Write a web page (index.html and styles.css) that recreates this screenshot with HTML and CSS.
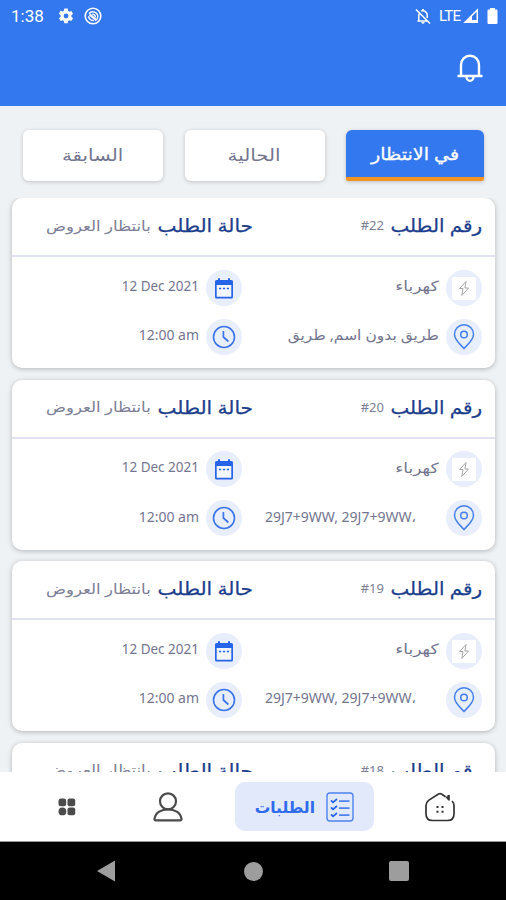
FILE: index.html
```html
<!DOCTYPE html>
<html lang="ar" dir="rtl">
<head>
<meta charset="utf-8">
<title>الطلبات</title>
<link rel="stylesheet" href="styles.css">
</head>
<body>
<svg class="defs" aria-hidden="true">
  <symbol id="bolt" viewBox="0 0 36 36"><rect x="6" y="7" width="24" height="23" rx="1" fill="#fff"/><path d="M20 11.500L13.500 18.500H17L15.800 25.500L22.500 18H18.900Z" fill="none" stroke="#a5a5aa" stroke-width="1" stroke-linejoin="round"/></symbol>
  <symbol id="pin" viewBox="0 0 36 36"><g fill="none" stroke="#4480ee" stroke-width="1.500"><path d="M18 29.500C15.500 26.500 8.500 21.500 8.500 15.300a9.500 9.500 0 0 1 19 0C27.500 21.500 20.500 26.500 18 29.500Z"/><circle cx="18" cy="15.500" r="3.300"/></g></symbol>
  <symbol id="calendar" viewBox="0 0 36 36"><path d="M10.500 10h1.500V8.300h2V10h8V8.300h2V10h1.500a1.500 1.500 0 0 1 1.500 1.500V27a1.500 1.500 0 0 1-1.500 1.500h-15A1.500 1.500 0 0 1 9 27V11.500a1.500 1.500 0 0 1 1.500-1.500Z" fill="#2563e8"/><path d="M10.700 15h14.600v11.700H10.700Z" fill="#f4f6ff"/><path d="M13 18.600h2.200m1.700 0h2.200m1.700 0H23" stroke="#2563e8" stroke-width="1.500"/></symbol>
  <symbol id="clock" viewBox="0 0 36 36"><g fill="none" stroke="#3c74ea"><circle cx="18" cy="18" r="10.500" stroke-width="1.600"/><path d="M17.400 12v6l5 4.500" stroke-width="1.700"/></g></symbol>
</svg>
<div class="screen">
  <header class="top">
    <div class="status" dir="ltr">
      <span class="time">1:38</span>
      <svg class="gear" viewBox="0 0 24 24"><path fill="#fff" fill-rule="evenodd" d="M19.140 12.940c.04-.3.06-.61.06-.94s-.02-.64-.07-.94l2.030-1.580a.49.49 0 0 0 .12-.61l-1.920-3.320a.49.49 0 0 0-.59-.22l-2.390.96a7 7 0 0 0-1.620-.94l-.36-2.540A.48.48 0 0 0 13.920 2h-3.840a.48.48 0 0 0-.48.410l-.36 2.540a7 7 0 0 0-1.620.94l-2.390-.96a.48.48 0 0 0-.59.220L2.740 8.870a.48.48 0 0 0 .12.610l2.030 1.580a8 8 0 0 0 0 1.880l-2.030 1.580a.49.49 0 0 0-.12.610l1.920 3.320c.12.220.37.290.59.220l2.390-.96c.5.380 1.030.7 1.620.94l.36 2.540c.05.240.24.410.48.410h3.840c.24 0 .44-.17.480-.41l.36-2.540a7 7 0 0 0 1.620-.94l2.390.96c.22.080.47 0 .59-.22l1.920-3.320a.48.48 0 0 0-.12-.61ZM12 15.200a3.200 3.200 0 1 1 0-6.400 3.200 3.200 0 0 1 0 6.400Z"/></svg>
      <svg class="badge" viewBox="0 0 18 18"><g fill="none" stroke="#fff"><circle cx="9" cy="9" r="7.800" stroke-width="1.600"/><path d="M5 6.500a5 5 0 0 1 8.800 3.300 5 5 0 0 1-2.800 3.700" stroke-width="1.400"/><path d="M4.600 9.200a4.500 4.500 0 0 0 5.200 4.300" stroke-width="1.500"/><path d="m5.500 7.300 6 5" stroke-width="2.200"/><path d="M8.300 7.200a3 3 0 0 1 3.200 3" stroke-width="1.400"/></g></svg>
      <span class="grow"></span>
      <svg class="mute" viewBox="0 0 16 17"><g fill="none" stroke="#fff" stroke-width="1.500"><path d="m1 1.500 14 14M3.800 13V7.500q0-1.500.7-2.500M6 3.200a4.300 4.300 0 0 1 6.200 4.300V10M2.500 13h9.500"/></g><path d="M6.300 14h3.400a1.700 1.700 0 0 1-3.400 0ZM7 1h2v2H7Z" fill="#fff"/></svg>
      <span class="lte">LTE</span>
      <svg class="signal" viewBox="0 0 16 16"><path d="M14.300 2v12.300H2Z" fill="none" stroke="#fff" stroke-width="1.500"/><path d="M1 15 9 7v5h6v3Z" fill="#fff"/></svg>
      <svg class="battery" viewBox="0 0 11 18"><path d="M3 1h5v1.600h1.500q1 0 1 1V16q0 1-1 1h-8q-1 0-1-1V3.600q0-1 1-1H3Z" fill="#fff"/></svg>
    </div>
    <svg class="bell" viewBox="0 0 28 30"><g fill="none" stroke="#fff" stroke-width="2.400"><path d="M5 23V12a9 9.300 0 0 1 18 0v11M1.500 23h25"/><path d="M10.500 23.500a3.500 4.400 0 0 0 7 0"/></g></svg>
  </header>

  <nav class="tabs">
    <a class="tab active"><span>في الانتظار</span></a>
    <a class="tab"><span>الحالية</span></a>
    <a class="tab"><span>السابقة</span></a>
  </nav>

  <main class="list">
    <article class="card">
      <div class="head"><div class="number"><b>رقم الطلب</b><span dir="ltr">#22</span></div><div class="state"><b>حالة الطلب</b><span>بانتظار العروض</span></div></div>
      <div class="details">
        <div class="item"><svg><use href="#bolt"/></svg><span class="service">كهرباء</span></div>
        <div class="item"><svg><use href="#calendar"/></svg><span class="date" dir="ltr">12 Dec 2021</span></div>
        <div class="item"><svg><use href="#pin"/></svg><span class="place">طريق بدون اسم, طريق</span></div>
        <div class="item"><svg><use href="#clock"/></svg><span dir="ltr">12:00 am</span></div>
      </div>
    </article>
    <article class="card">
      <div class="head"><div class="number"><b>رقم الطلب</b><span dir="ltr">#20</span></div><div class="state"><b>حالة الطلب</b><span>بانتظار العروض</span></div></div>
      <div class="details">
        <div class="item"><svg><use href="#bolt"/></svg><span class="service">كهرباء</span></div>
        <div class="item"><svg><use href="#calendar"/></svg><span class="date" dir="ltr">12 Dec 2021</span></div>
        <div class="item"><svg><use href="#pin"/></svg><span class="code" dir="ltr">29J7+9WW, 29J7+9WW،</span></div>
        <div class="item"><svg><use href="#clock"/></svg><span dir="ltr">12:00 am</span></div>
      </div>
    </article>
    <article class="card">
      <div class="head"><div class="number"><b>رقم الطلب</b><span dir="ltr">#19</span></div><div class="state"><b>حالة الطلب</b><span>بانتظار العروض</span></div></div>
      <div class="details">
        <div class="item"><svg><use href="#bolt"/></svg><span class="service">كهرباء</span></div>
        <div class="item"><svg><use href="#calendar"/></svg><span class="date" dir="ltr">12 Dec 2021</span></div>
        <div class="item"><svg><use href="#pin"/></svg><span class="code" dir="ltr">29J7+9WW, 29J7+9WW،</span></div>
        <div class="item"><svg><use href="#clock"/></svg><span dir="ltr">12:00 am</span></div>
      </div>
    </article>
    <article class="card">
      <div class="head"><div class="number"><b>رقم الطلب</b><span dir="ltr">#18</span></div><div class="state"><b>حالة الطلب</b><span>بانتظار العروض</span></div></div>
    </article>
  </main>

  <nav class="bottom" dir="ltr">
    <svg class="grid" viewBox="0 0 18 18" fill="#4b4b4b"><rect x=".5" y=".5" width="7.700" height="7.700" rx="2.500"/><rect x="9.500" y=".5" width="7.700" height="7.700" rx="2"/><circle cx="4.400" cy="13.400" r="3.900"/><rect x="9.500" y="9.500" width="7.700" height="7.700" rx="2"/></svg>
    <svg class="person" viewBox="0 0 30 30"><g fill="none" stroke="#4b4b4b" stroke-width="2.200"><circle cx="15" cy="9.300" r="8"/><path d="M3 28.400q-1.700 0-1.500-1.700C2.500 20.500 8.500 17.300 15 17.300s12.500 3.200 13.500 9.400q.2 1.700-1.500 1.700Z"/></g></svg>
    <a class="current"><span dir="rtl">الطلبات</span>
      <svg viewBox="0 0 28 30"><g fill="none" stroke="#4f83ed" stroke-width="1.400"><rect x="1" y="1" width="26" height="28" rx="3"/><path d="M13 9.200h10.500M13 16.200h10.500M13 23.200h10.500" stroke-width="1.800"/><path d="m5 8.300 2 2 4-3.300M5 15.300l2 2 4-3.300M5 22.300l2 2 4-3.300" stroke="#2563e8" stroke-width="1.700"/></g></svg>
    </a>
    <svg class="home" viewBox="0 0 30 30"><path d="M20.500 4.700 16.500 2q-1.500-.9-3 0L3.600 8.400Q1 10.500 1 13.500V22q0 6.500 6.500 6.500h15Q29 28.500 29 22v-8.500q0-2.500-2-4.500" fill="none" stroke="#333" stroke-width="1.700"/><path d="M20 4.500h2.500V3h2.300v5.500h-1.500ZM11.500 14h2v2h-2ZM16.500 14h2v2h-2ZM11.500 18.700h2v2h-2ZM16.500 18.700h2v2h-2Z" fill="#333"/></svg>
  </nav>
  <footer class="system" dir="ltr">
    <svg class="back" viewBox="0 0 18 22"><path d="M0 11 18 .5v21Z" fill="#9d9d9d"/></svg>
    <i class="circle"></i>
    <i class="square"></i>
  </footer>
</div>
</body>
</html>
```

FILE: styles.css
```css
* { box-sizing: border-box; }
body { margin: 0; font-family: "Noto Sans", "DejaVu Sans", sans-serif; }
.defs { display: none; }
svg { display: block; flex: none; }
.screen { width: 506px; height: 900px; display: flex; flex-direction: column; overflow: hidden; background: #eef2f5; }
.top { height: 106px; flex: none; background: #3478f0; }
.status { height: 32px; display: flex; align-items: center; padding: 0 8px 0 11px; color: #fff; font-family: Roboto, sans-serif; }
.time { font-size: 17px; width: 46px; }
.gear { width: 18px; height: 18px; }
.badge { width: 18px; height: 18px; margin-left: 9px; }
.grow { flex: 1; }
.mute { width: 16px; height: 17px; }
.lte { font-size: 15px; width: 24px; margin-left: 8px; letter-spacing: -.8px; }
.signal { width: 16px; height: 16px; }
.battery { width: 11px; height: 18px; margin-left: 8px; }
.bell { width: 28px; height: 30px; margin: 21px 22px 0 0; }
.tabs { height: 92px; flex: none; display: flex; justify-content: space-between; padding: 24px 22px 0 23px; }
.tab { width: 140px; height: 51px; padding-bottom: 3px; display: flex; align-items: center; justify-content: center; border-radius: 6px; background: #fff; color: #73758f; font-size: 16.500px; box-shadow: 0 1px 4px #0003; }
.tab span { transform: scaleX(1.2); }
.tab.active { width: 138px; background: #3478f0; color: #fff; border-bottom: 4px solid #f3931f; padding: 0; border-radius: 6px 6px 2px 2px; -webkit-text-stroke: .3px; }
.tab.active span { transform: scaleX(1.16); }
.list { flex: 1; min-height: 0; overflow: hidden; padding: 0 11px 0 12px; display: flex; flex-direction: column; gap: 11.500px; }
.card { height: 170px; flex: none; border-radius: 10px; background: #fff; box-shadow: 0 1px 5px #00000040; }
.head { height: 59px; border-bottom: 2px solid #dfe3f2; display: flex; padding: 0 13px 3px 0; }
.number, .state { display: flex; align-items: center; gap: 7px; white-space: nowrap; color: #7c7e96; font-size: 14px; }
.number { width: 229px; }
.number span { font-size: 13px; }
.head b { width: 91px; font-size: 18px; font-weight: 400; color: #1c3d8c; transform: scaleX(1.105); transform-origin: right; -webkit-text-stroke: .25px; }
.head .state b { width: 95px; transform: scaleX(1.12); }
.state span { transform: scaleX(1.18); transform-origin: right; }
.details { display: grid; grid-template-columns: 240px 1fr; grid-template-rows: 37px 37px; row-gap: 12px; padding: 12px 13px 0 0; }
.item { display: flex; align-items: center; gap: 7px; color: #73758f; font-size: 14px; white-space: nowrap; }
.item svg { width: 36px; height: 36px; border-radius: 50%; background: #e9eefc; }
.item span { margin-bottom: 4px; transform-origin: right; }
.item .service { transform: scaleX(1.22); }
.item .place { transform: scaleX(1.105); }
.item .date { font-size: 13.500px; }
.item .code { margin-right: 23px; }
.bottom { height: 70px; flex: none; background: #fff; border-bottom: 1px solid #999; display: flex; align-items: center; }
.grid { width: 18px; height: 18px; margin-left: 58px; }
.person { width: 30px; height: 30px; margin-left: 77px; }
.current { width: 139px; height: 49px; margin: 0 51px 0 52px; display: flex; align-items: center; justify-content: flex-end; gap: 11px; padding-right: 20px; border-radius: 10px; background: #e1e9fb; color: #2f6ceb; font-size: 15.500px; font-weight: 700; }
.current svg { width: 28px; height: 30px; }
.home { width: 30px; height: 30px; }
.system { height: 58px; flex: none; background: #000; display: flex; align-items: center; }
.back { width: 18px; height: 22px; margin-left: 97px; }
.circle { width: 19px; height: 19px; border-radius: 50%; background: #9d9d9d; margin-left: 129px; }
.square { width: 20px; height: 20px; border-radius: 2px; background: #9d9d9d; margin-left: 126px; }
```
